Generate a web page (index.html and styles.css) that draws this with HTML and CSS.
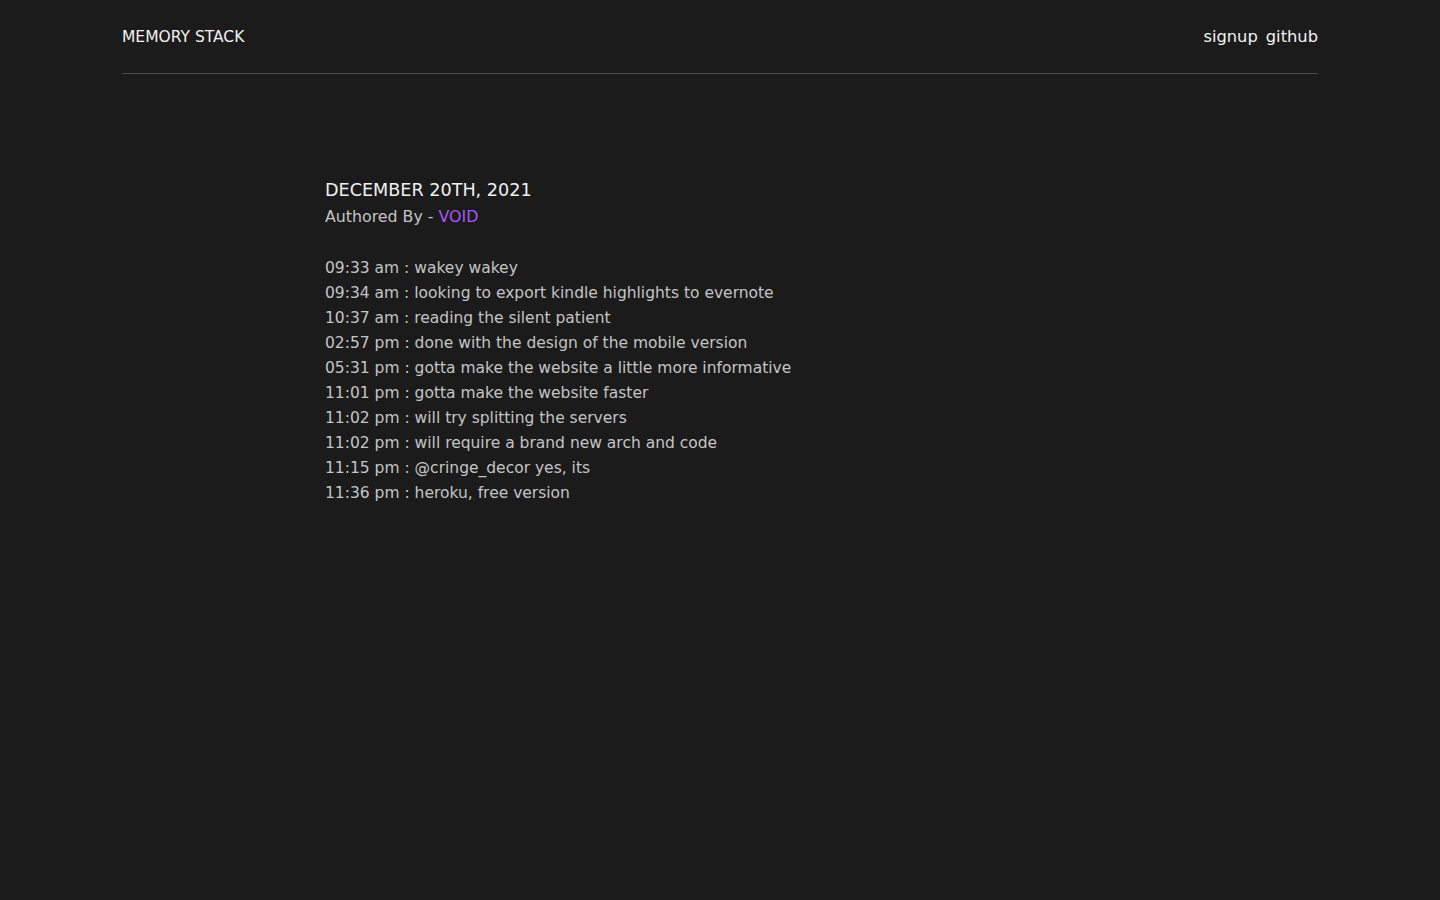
FILE: index.html
```html
<!DOCTYPE html>
<html lang="en">
<head>
<meta charset="utf-8">
<title>Memory Stack</title>
<link rel="stylesheet" href="styles.css">
</head>
<body>
<header class="topbar">
  <div class="brand">MEMORY STACK</div>
  <nav class="nav">
    <a href="#">signup</a>
    <a href="#">github</a>
  </nav>
</header>
<main class="post">
  <h1 class="date">DECEMBER 20TH, 2021</h1>
  <p class="author">Authored By - <span class="name">VOID</span></p>
  <ul class="entries">
    <li>09:33 am : wakey wakey</li>
    <li>09:34 am : looking to export kindle highlights to evernote</li>
    <li>10:37 am : reading the silent patient</li>
    <li>02:57 pm : done with the design of the mobile version</li>
    <li>05:31 pm : gotta make the website a little more informative</li>
    <li>11:01 pm : gotta make the website faster</li>
    <li>11:02 pm : will try splitting the servers</li>
    <li>11:02 pm : will require a brand new arch and code</li>
    <li>11:15 pm : @cringe_decor yes, its</li>
    <li>11:36 pm : heroku, free version</li>
  </ul>
</main>
</body>
</html>
```
FILE: styles.css
```css
html, body {
  margin: 0;
  padding: 0;
  background: #1b1b1b;
}
body {
  font-family: "DejaVu Sans", "Open Sans", sans-serif;
  color: #c4c4c4;
  min-height: 900px;
}
.topbar {
  width: 1196px;
  margin: 0 auto;
  height: 74px;
  box-sizing: border-box;
  border-bottom: 1px solid #4a4a4a;
  display: flex;
  justify-content: space-between;
  align-items: center;
  padding-bottom: 1px;
}
.brand {
  color: #f2f2f2;
  font-size: 15.5px;
  padding-top: 2px;
}
.nav {
  display: flex;
  gap: 8px;
}
.nav a {
  color: #f2f2f2;
  text-decoration: none;
  font-size: 16.3px;
}
.post {
  width: 790px;
  margin: 0 auto;
  padding-top: 104px;
}
.date {
  margin: 0;
  font-weight: normal;
  font-size: 17.6px;
  line-height: 24px;
  color: #f0f0f0;
}
.author {
  margin: 3px 0 0;
  font-size: 15.8px;
  line-height: 24px;
  color: #c4c4c4;
}
.name {
  color: #a855f7;
}
.entries {
  list-style: none;
  margin: 27px 0 0;
  padding: 0;
  font-size: 15.5px;
  line-height: 25px;
}
```
